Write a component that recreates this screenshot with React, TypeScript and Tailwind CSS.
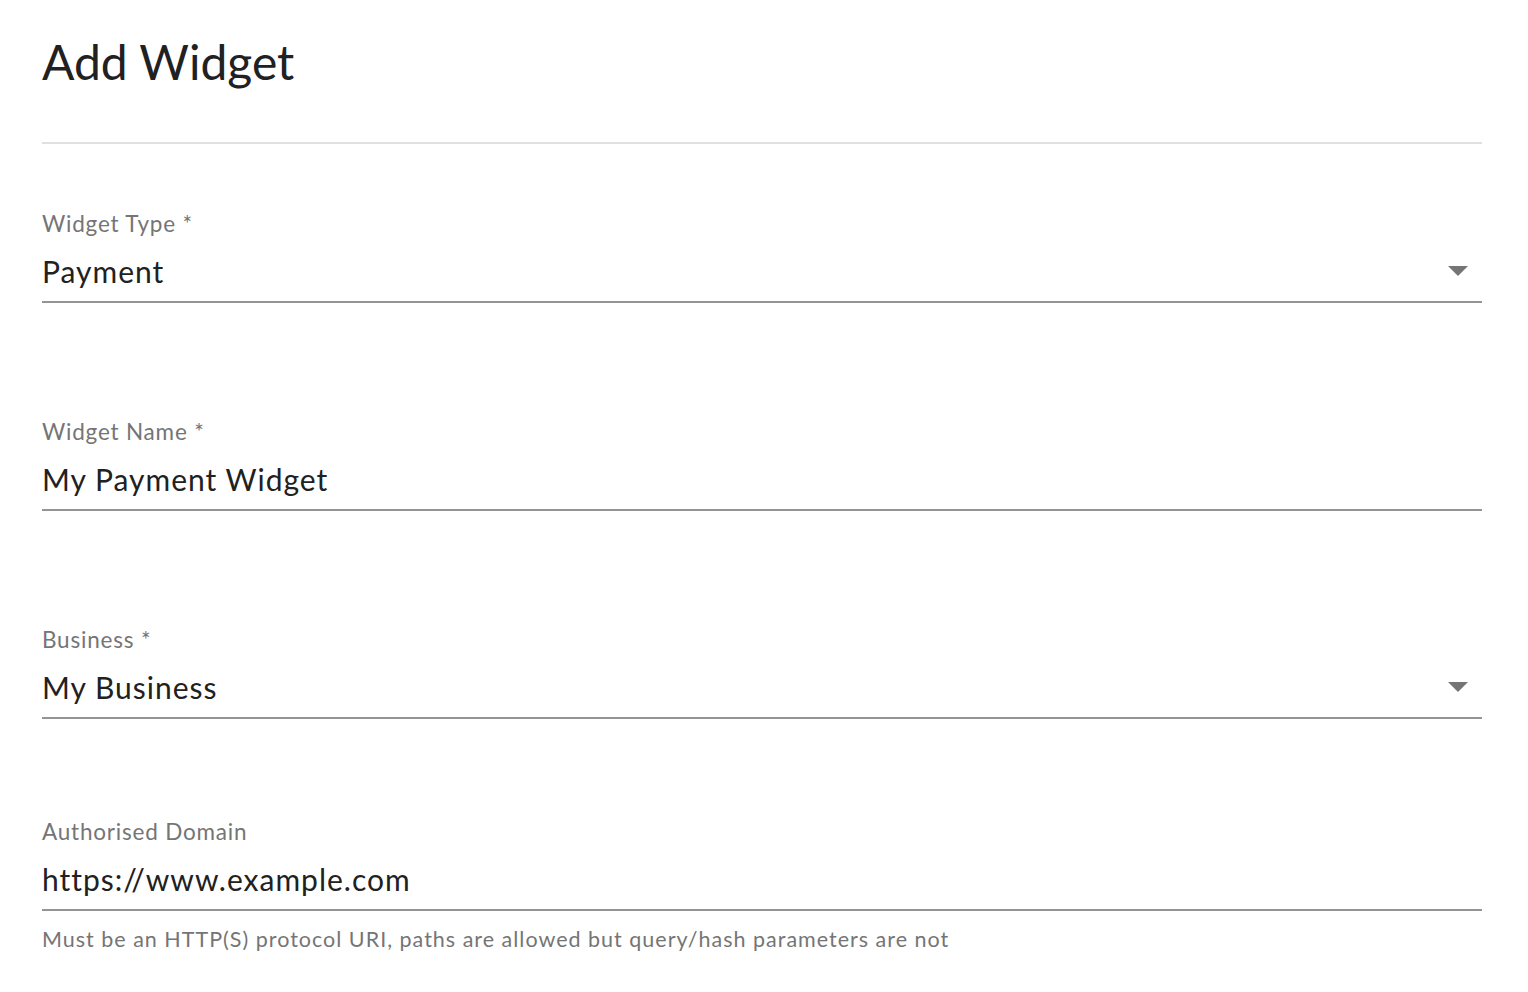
import React from 'react';

const font = { fontFamily: 'Lato, "Noto Sans", sans-serif' };

const Caret = () => (
    <svg width="20" height="10" viewBox="0 0 20 10" className="shrink-0">
        <path d="M0 0 L20 0 L10 10 Z" fill="#757575" />
    </svg>
);

interface FieldProps {
    label: string;
    value: string;
    required?: boolean;
    select?: boolean;
    helper?: string;
    className?: string;
}

const Field: React.FC<FieldProps> = ({ label, value, required, select, helper, className }) => (
    <div className={`flex flex-col ${className ?? ''}`}>
        <label className="text-[22.5px] leading-[21px] tracking-[0.8px] text-[#757575]">
            {label}
            {required && <span> *</span>}
        </label>
        <div className="mt-[23px] flex items-center justify-between pr-[14px]">
            <span className="text-[30px] leading-[28px] tracking-[1px] text-[#212121]">{value}</span>
            {select && <Caret />}
        </div>
        <div className="mt-[16px] h-[2px] w-full bg-[#949494]" />
        {helper && (
            <p className="mt-[18px] text-[21.5px] leading-[20px] tracking-[1px] text-[#757575]">{helper}</p>
        )}
    </div>
);

export default function App() {
    return (
        <div className="min-h-screen bg-white pl-[42px] pr-[46px] pt-[37px]" style={font}>
            <h1 className="text-[48px] leading-[50px] font-normal text-[#212121]">Add Widget</h1>
            <div className="mt-[55px] h-[2px] w-full bg-[#e0e0e0]" />

            <form className="flex flex-col">
                <Field className="mt-[69px]" label="Widget Type" required select value="Payment" />
                <Field className="mt-[118px]" label="Widget Name" required value="My Payment Widget" />
                <Field className="mt-[118px]" label="Business" required select value="My Business" />
                <Field
                    className="mt-[102px]"
                    label="Authorised Domain"
                    value="https://www.example.com"
                    helper="Must be an HTTP(S) protocol URI, paths are allowed but query/hash parameters are not"
                />
            </form>
        </div>
    );
}
